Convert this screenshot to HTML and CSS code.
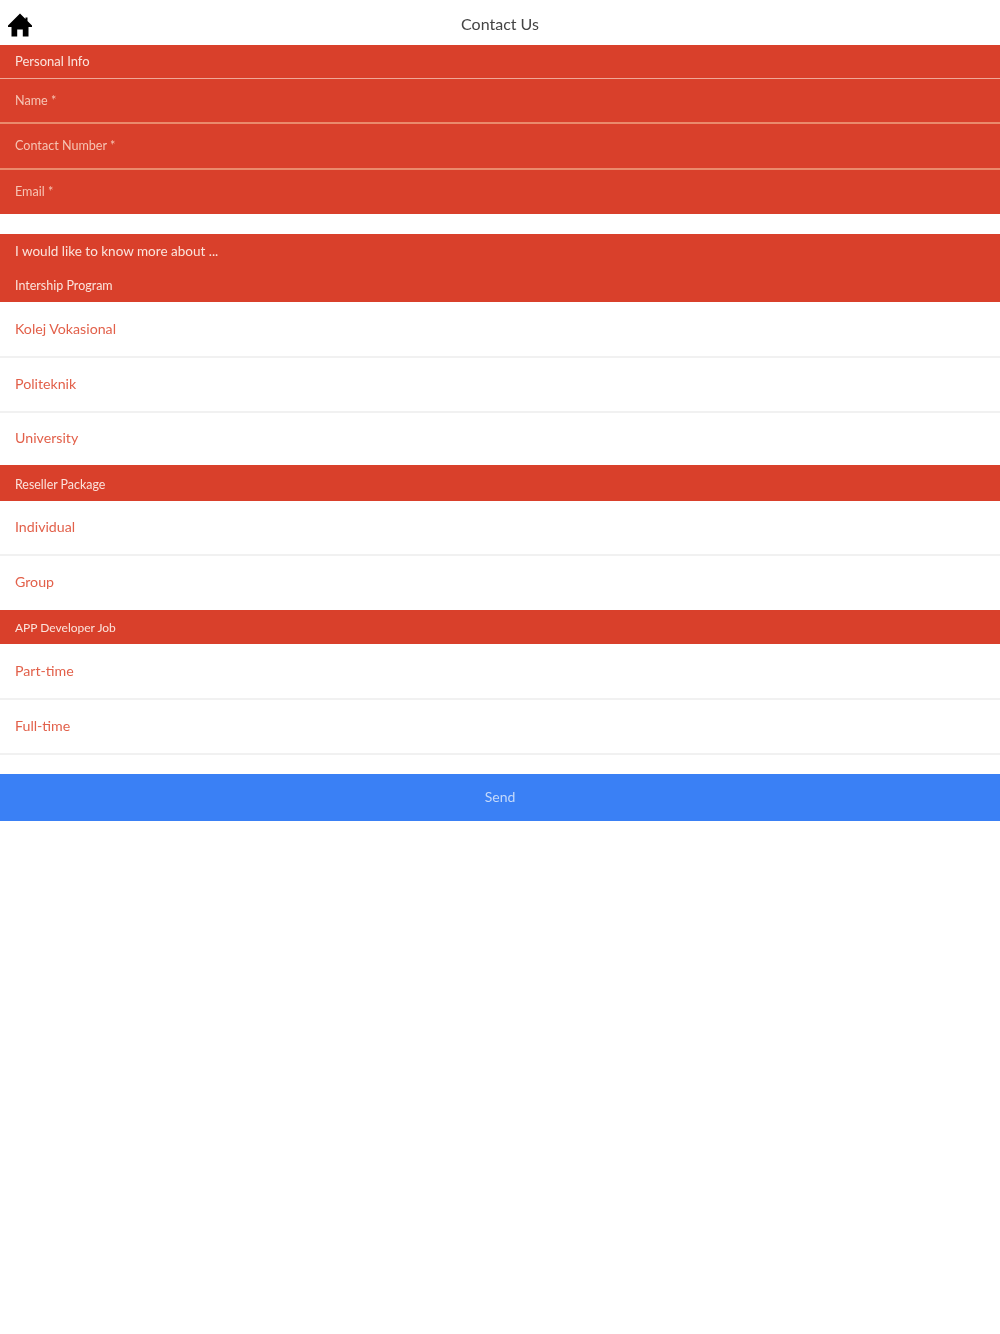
FILE: index.html
```html
<!DOCTYPE html>
<html lang="en">
<head>
  <meta charset="UTF-8" />
  <meta name="viewport" content="width=device-width, initial-scale=1.0"/>
  <title>Contact Us</title>
  <link rel="stylesheet" href="styles.css">
</head>
<body>
  <header class="Header">
    <a class="home" href="#" aria-label="Home">
      <svg viewBox="0 0 24 24" width="24" height="24"><path d="M12 0.5 L17.5 6 V4.5 H19.5 V8 L24 12.5 V14 H20.5 V23.5 H14.8 V16.5 H9.2 V23.5 H3.5 V14 H0 V12.5 Z"/></svg>
    </a>
    <h1 class="title">Contact Us</h1>
  </header>

  <form class="Form">
    <div class="section-title">Personal Info</div>
    <input class="field" type="text" placeholder="Name *">
    <input class="field" type="text" placeholder="Contact Number *">
    <input class="field last" type="text" placeholder="Email *">

    <div class="about">
      <div class="about-title">I would like to know more about ...</div>
      <div class="about-sub">Intership Program</div>
    </div>
    <div class="item tall">Kolej Vokasional</div>
    <div class="item">Politeknik</div>
    <div class="item end">University</div>

    <div class="group-title">Reseller Package</div>
    <div class="item">Individual</div>
    <div class="item no-line">Group</div>

    <div class="group-title thin">APP Developer Job</div>
    <div class="item tall">Part-time</div>
    <div class="item">Full-time</div>

    <button class="send" type="button">Send</button>
  </form>
</body>
</html>
```

FILE: styles.css
```css
* {
  margin: 0;
  padding: 0;
  box-sizing: border-box;
}

html, body {
  width: 100%;
  height: 100%;
  background-color: #fff;
  font-family: 'Lato', 'Open Sans', sans-serif;
}

/* the source picture is a soft upscale */
.Header, .Form {
  filter: blur(0.7px);
}

.Header {
  display: flex;
  align-items: center;
  justify-content: center;
  position: relative;
  height: 45px;
  padding-top: 2px;
  background-color: #fff;
}

.home {
  position: absolute;
  left: 8px;
  top: 13px;
  display: block;
  line-height: 0;
  color: #000;
}

.home svg {
  fill: currentColor;
}

.title {
  font-size: 16px;
  font-weight: 400;
  color: #444;
}

.section-title {
  display: flex;
  align-items: center;
  height: 34px;
  padding-left: 15px;
  padding-bottom: 2px;
  font-size: 13px;
  color: #fbe3dc;
  background-color: #d9402b;
  border-bottom: 1px solid #f0a898;
}

.field {
  display: block;
  width: 100%;
  height: 46px;
  padding-left: 15px;
  padding-bottom: 1px;
  border: none;
  border-bottom: 2px solid #ea8a6c;
  border-radius: 0;
  outline: none;
  background-color: #d9402b;
  font-family: inherit;
  font-size: 12.6px;
  color: #fff;
}

.field:first-of-type {
  height: 45px;
}

.field.last {
  height: 44px;
  border-bottom: none;
}

.field::placeholder {
  color: #f6c4b4;
  opacity: 1;
}

.about {
  margin-top: 20px;
  height: 68px;
  padding-left: 15px;
  color: #fbe3dc;
  background-color: #d9402b;
}

.about-title {
  height: 34px;
  line-height: 34px;
  font-size: 13.5px;
}

.about-sub {
  height: 34px;
  line-height: 36px;
  font-size: 12.5px;
}

.group-title {
  display: flex;
  align-items: center;
  height: 36px;
  padding-left: 15px;
  padding-top: 2px;
  font-size: 12.4px;
  color: #fbe3dc;
  background-color: #d9402b;
}

.group-title.thin {
  height: 34px;
  padding-top: 1px;
  font-size: 12px;
}

.item {
  display: flex;
  align-items: center;
  height: 55px;
  padding-left: 15px;
  padding-bottom: 2px;
  font-size: 14.2px;
  color: #e2604a;
  background-color: #fff;
  border-bottom: 2px solid #f1f1f1;
}

.item.tall {
  height: 56px;
}

.item.end {
  height: 52px;
  padding-bottom: 3px;
  border-bottom: none;
}

.item.no-line {
  height: 54px;
  padding-bottom: 4px;
  border-bottom: none;
}

.send {
  display: block;
  width: 100%;
  height: 47px;
  margin-top: 19px;
  padding-bottom: 2px;
  border: none;
  background-color: #3a80f5;
  color: #c4d9fb;
  font-family: inherit;
  font-size: 14px;
}
```
